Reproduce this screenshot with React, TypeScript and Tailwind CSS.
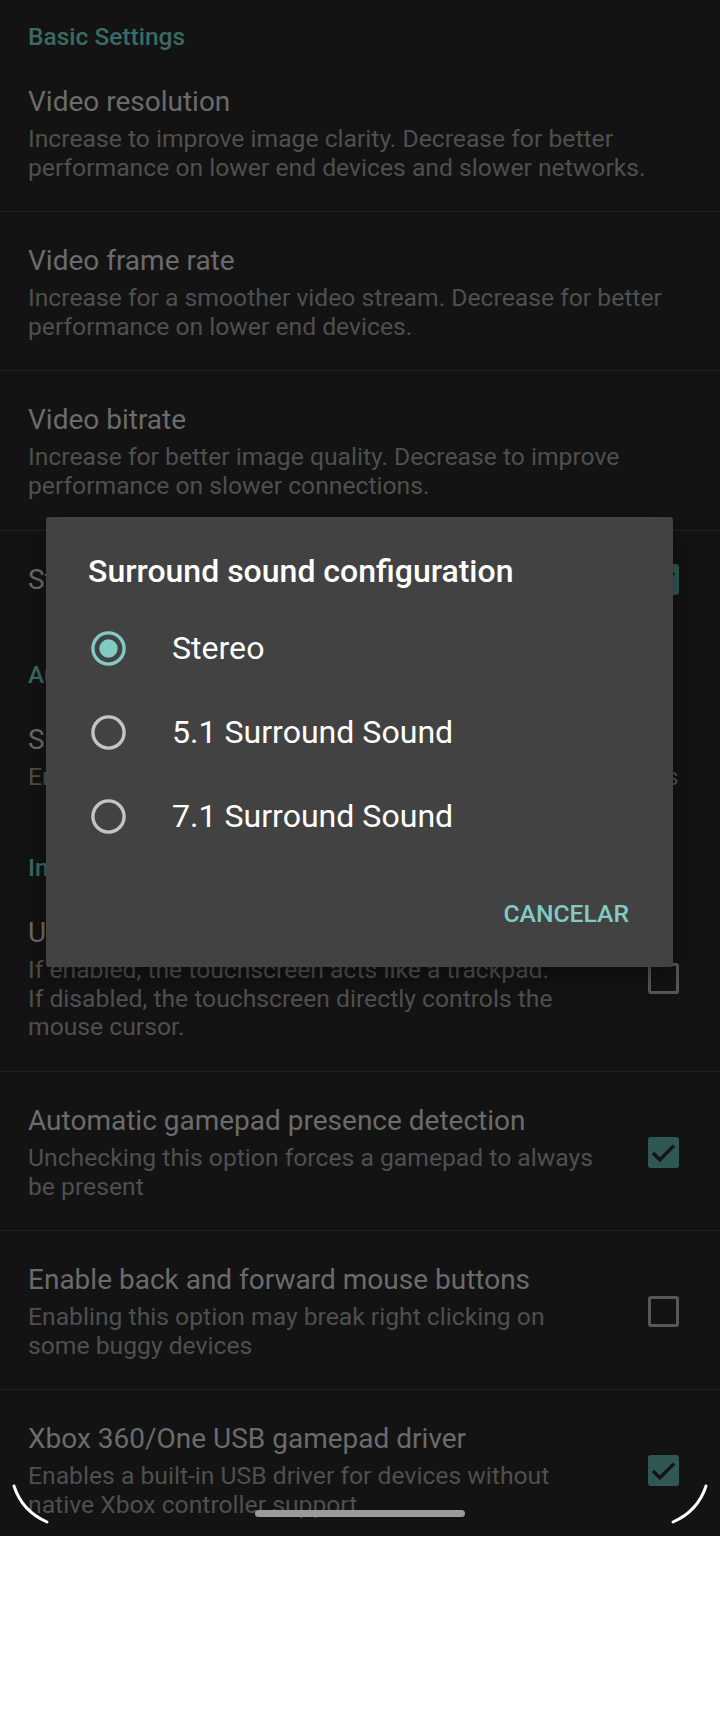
import React from "react";

type Pref =
  | { kind: "category"; label: string; first?: boolean }
  | { kind: "item"; title: string; summary?: string[]; check?: "on" | "off"; divider?: boolean };

const prefs: Pref[] = [
  { kind: "category", label: "Basic Settings", first: true },
  {
    kind: "item",
    title: "Video resolution",
    summary: [
      "Increase to improve image clarity. Decrease for better",
      "performance on lower end devices and slower networks.",
    ],
  },
  {
    kind: "item",
    title: "Video frame rate",
    summary: ["Increase for a smoother video stream. Decrease for better", "performance on lower end devices."],
    divider: true,
  },
  {
    kind: "item",
    title: "Video bitrate",
    summary: ["Increase for better image quality. Decrease to improve", "performance on slower connections."],
    divider: true,
  },
  { kind: "item", title: "Stretch video to full-screen", check: "on", divider: true },
  { kind: "category", label: "Audio Settings" },
  {
    kind: "item",
    title: "Surround sound configuration",
    summary: ["Enable 5.1 or 7.1 surround sound for home-theater systems"],
  },
  { kind: "category", label: "Input Settings" },
  {
    kind: "item",
    title: "Use touchscreen as a trackpad",
    summary: [
      "If enabled, the touchscreen acts like a trackpad.",
      "If disabled, the touchscreen directly controls the",
      "mouse cursor.",
    ],
    check: "off",
  },
  {
    kind: "item",
    title: "Automatic gamepad presence detection",
    summary: ["Unchecking this option forces a gamepad to always", "be present"],
    check: "on",
    divider: true,
  },
  {
    kind: "item",
    title: "Enable back and forward mouse buttons",
    summary: ["Enabling this option may break right clicking on", "some buggy devices"],
    check: "off",
    divider: true,
  },
  {
    kind: "item",
    title: "Xbox 360/One USB gamepad driver",
    summary: ["Enables a built-in USB driver for devices without", "native Xbox controller support"],
    check: "on",
    divider: true,
  },
];

const CheckBox = ({ on }: { on: boolean }) =>
  on ? (
    <div className="ml-[36px] w-[31px] h-[31px] shrink-0 rounded-[3px] bg-[#2f5854]">
      <svg width="31" height="31" viewBox="0 0 31 31">
        <path d="M5 16 L11.8 22.8 L26 8.6" fill="none" stroke="#141414" strokeWidth="3.4" />
      </svg>
    </div>
  ) : (
    <div className="ml-[36px] w-[31px] h-[31px] shrink-0 rounded-[3px] border-[3px] border-[#575757]" />
  );

const Radio = ({ on }: { on: boolean }) => (
  <svg width="35" height="35" viewBox="0 0 35 35" className="shrink-0">
    <circle cx="17.5" cy="17.5" r="15.6" fill="none" stroke={on ? "#80cbc4" : "#c4c4c4"} strokeWidth="3.4" />
    {on && <circle cx="17.5" cy="17.5" r="9.2" fill="#80cbc4" />}
  </svg>
);

const options = ["Stereo", "5.1 Surround Sound", "7.1 Surround Sound"];

export default function App() {
  return (
    <div className="w-[720px] h-[1712px] bg-white font-['Roboto',sans-serif]">
      <div className="relative h-[1536px] bg-[#131313] overflow-hidden">
        {prefs.map((p, i) =>
          p.kind === "category" ? (
            <div
              key={i}
              className={`${p.first ? "pt-[22px]" : "pt-[33px]"} pb-[2px] px-[28px] text-[24.5px] leading-[29px] font-medium text-[#3b6a65]`}
            >
              {p.label}
            </div>
          ) : (
            <div key={i}>
              {p.divider && <div className="h-px bg-[#222222]" />}
              <div className="flex items-center pl-[28px] pr-[41px] pt-[31px] pb-[29px]">
                <div className="flex-1 min-w-0">
                  <div className="text-[28px] leading-[36px] text-[#6b6b6b] whitespace-nowrap">{p.title}</div>
                  {p.summary && (
                    <div className="mt-[5px] text-[24.7px] leading-[28.6px] text-[#4f4f4f] whitespace-nowrap">
                      {p.summary.map((line, j) => (
                        <div key={j}>{line}</div>
                      ))}
                    </div>
                  )}
                </div>
                {p.check && <CheckBox on={p.check === "on"} />}
              </div>
            </div>
          )
        )}

        {/* dialog */}
        <div className="absolute left-[46px] top-[517px] w-[627px] h-[450px] rounded-[3px] bg-[#424242] shadow-[0_8px_24px_rgba(0,0,0,0.35)]">
          <div className="pt-[36px] px-[42px] text-[32px] leading-[37px] font-medium text-white">
            Surround sound configuration
          </div>
          <div className="mt-[16px]">
            {options.map((o, i) => (
              <div key={o} className="h-[84px] flex items-center pl-[45px]">
                <Radio on={i === 0} />
                <span className="ml-[46px] text-[32.1px] leading-[37px] text-white">{o}</span>
              </div>
            ))}
          </div>
          <div className="mt-[41px] flex justify-end pr-[44px]">
            <span className="text-[24.7px] leading-[29px] font-medium text-[#80cbc4]">CANCELAR</span>
          </div>
        </div>

        {/* nav handle + screen corners */}
        <div className="absolute left-[255px] top-[1510px] w-[210px] h-[7px] rounded-full bg-[#9a9a9a]" />
        <svg className="absolute left-0 top-[1470px]" width="720" height="66" viewBox="0 1470 720 66">
          <path d="M14 1486 Q22 1511 47 1522" fill="none" stroke="#ffffff" strokeWidth="3" strokeLinecap="round" />
          <path d="M706 1486 Q698 1511 673 1522" fill="none" stroke="#ffffff" strokeWidth="3" strokeLinecap="round" />
        </svg>
      </div>
    </div>
  );
}
